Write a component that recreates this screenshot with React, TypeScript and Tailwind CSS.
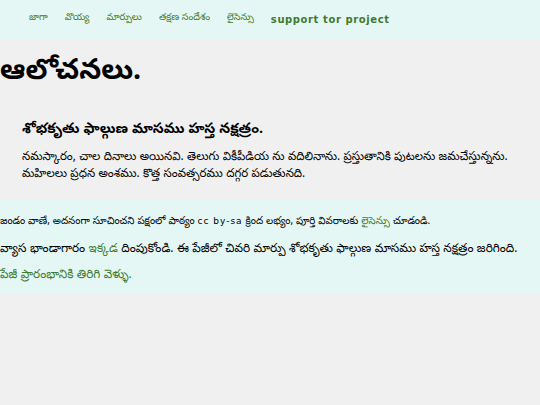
import React from "react";

const tel = { fontFamily: '"Noto Sans Telugu", "Lohit Telugu", "Pothana2000", "Noto Sans", "DejaVu Sans", sans-serif' };
const lat = { fontFamily: '"DejaVu Sans", sans-serif' };

export default function App() {
  return (
    <div className="min-h-[405px] w-[540px] bg-[#f0f0f0] text-black" style={tel}>
      <div className="flex h-[40px] items-center gap-[17px] bg-[#e5f7f5] pb-[1px] pl-[29px] text-[9.5px] text-[#3f7a2e]">
        <span>జాగా</span>
        <span>వొయ్య</span>
        <span>మార్పులు</span>
        <span>తక్షణ సందేశం</span>
        <span>లైసెన్సు</span>
        <span className="text-[10px] font-bold tracking-[0.6px]" style={lat}>support tor project</span>
      </div>
      <h1 className="mt-[14px] text-[28.5px] font-bold leading-[40px]">ఆలోచనలు.</h1>
      <h2 className="mt-[27px] pl-[22px] text-[14.2px] font-bold leading-[20px]">శోభకృతు ఫాల్గుణ మాసము హస్త నక్షత్రం.</h2>
      <p className="mt-[9px] pl-[22px] pr-[18px] text-[11.7px] leading-[17px]">
        నమస్కారం, చాల దినాలు అయినవి. తెలుగు వికీపీడియ ను వదిలినాను. ప్రస్తుతానికి పుటలను జమచేస్తున్నను. మహిలలు ప్రధన అంశము. కొత్త సంవత్సరము దగ్గర పడుతునది.
      </p>
      <div className="mt-[16px] flex h-[94px] flex-col bg-[#e5f7f5] pt-[14px]">
        <p className="text-[10.2px] leading-[14px]">
          జండం వాణే, అదనంగా సూచించని పక్షంలో పాఠ్యం <span style={lat} className="text-[9px] tracking-[1px]">cc by-sa</span> క్రింద లభ్యం, పూర్తి వివరాలకు <span className="text-[#3f7a2e]">లైసెన్సు</span> చూడండి.
        </p>
        <p className="mt-[13px] text-[12px] leading-[16px]">
          వ్యాస భాండాగారం <span className="text-[#3f7a2e]">ఇక్కడ</span> దింపుకోండి. ఈ పేజీలో చివరి మార్పు శోభకృతు ఫాల్గుణ మాసము హస్త నక్షత్రం జరిగింది.
        </p>
        <p className="mt-[10px] text-[12px] leading-[16px] text-[#3f7a2e]">పేజీ ప్రారంభానికి తిరిగి వెళ్ళు.</p>
      </div>
    </div>
  );
}
